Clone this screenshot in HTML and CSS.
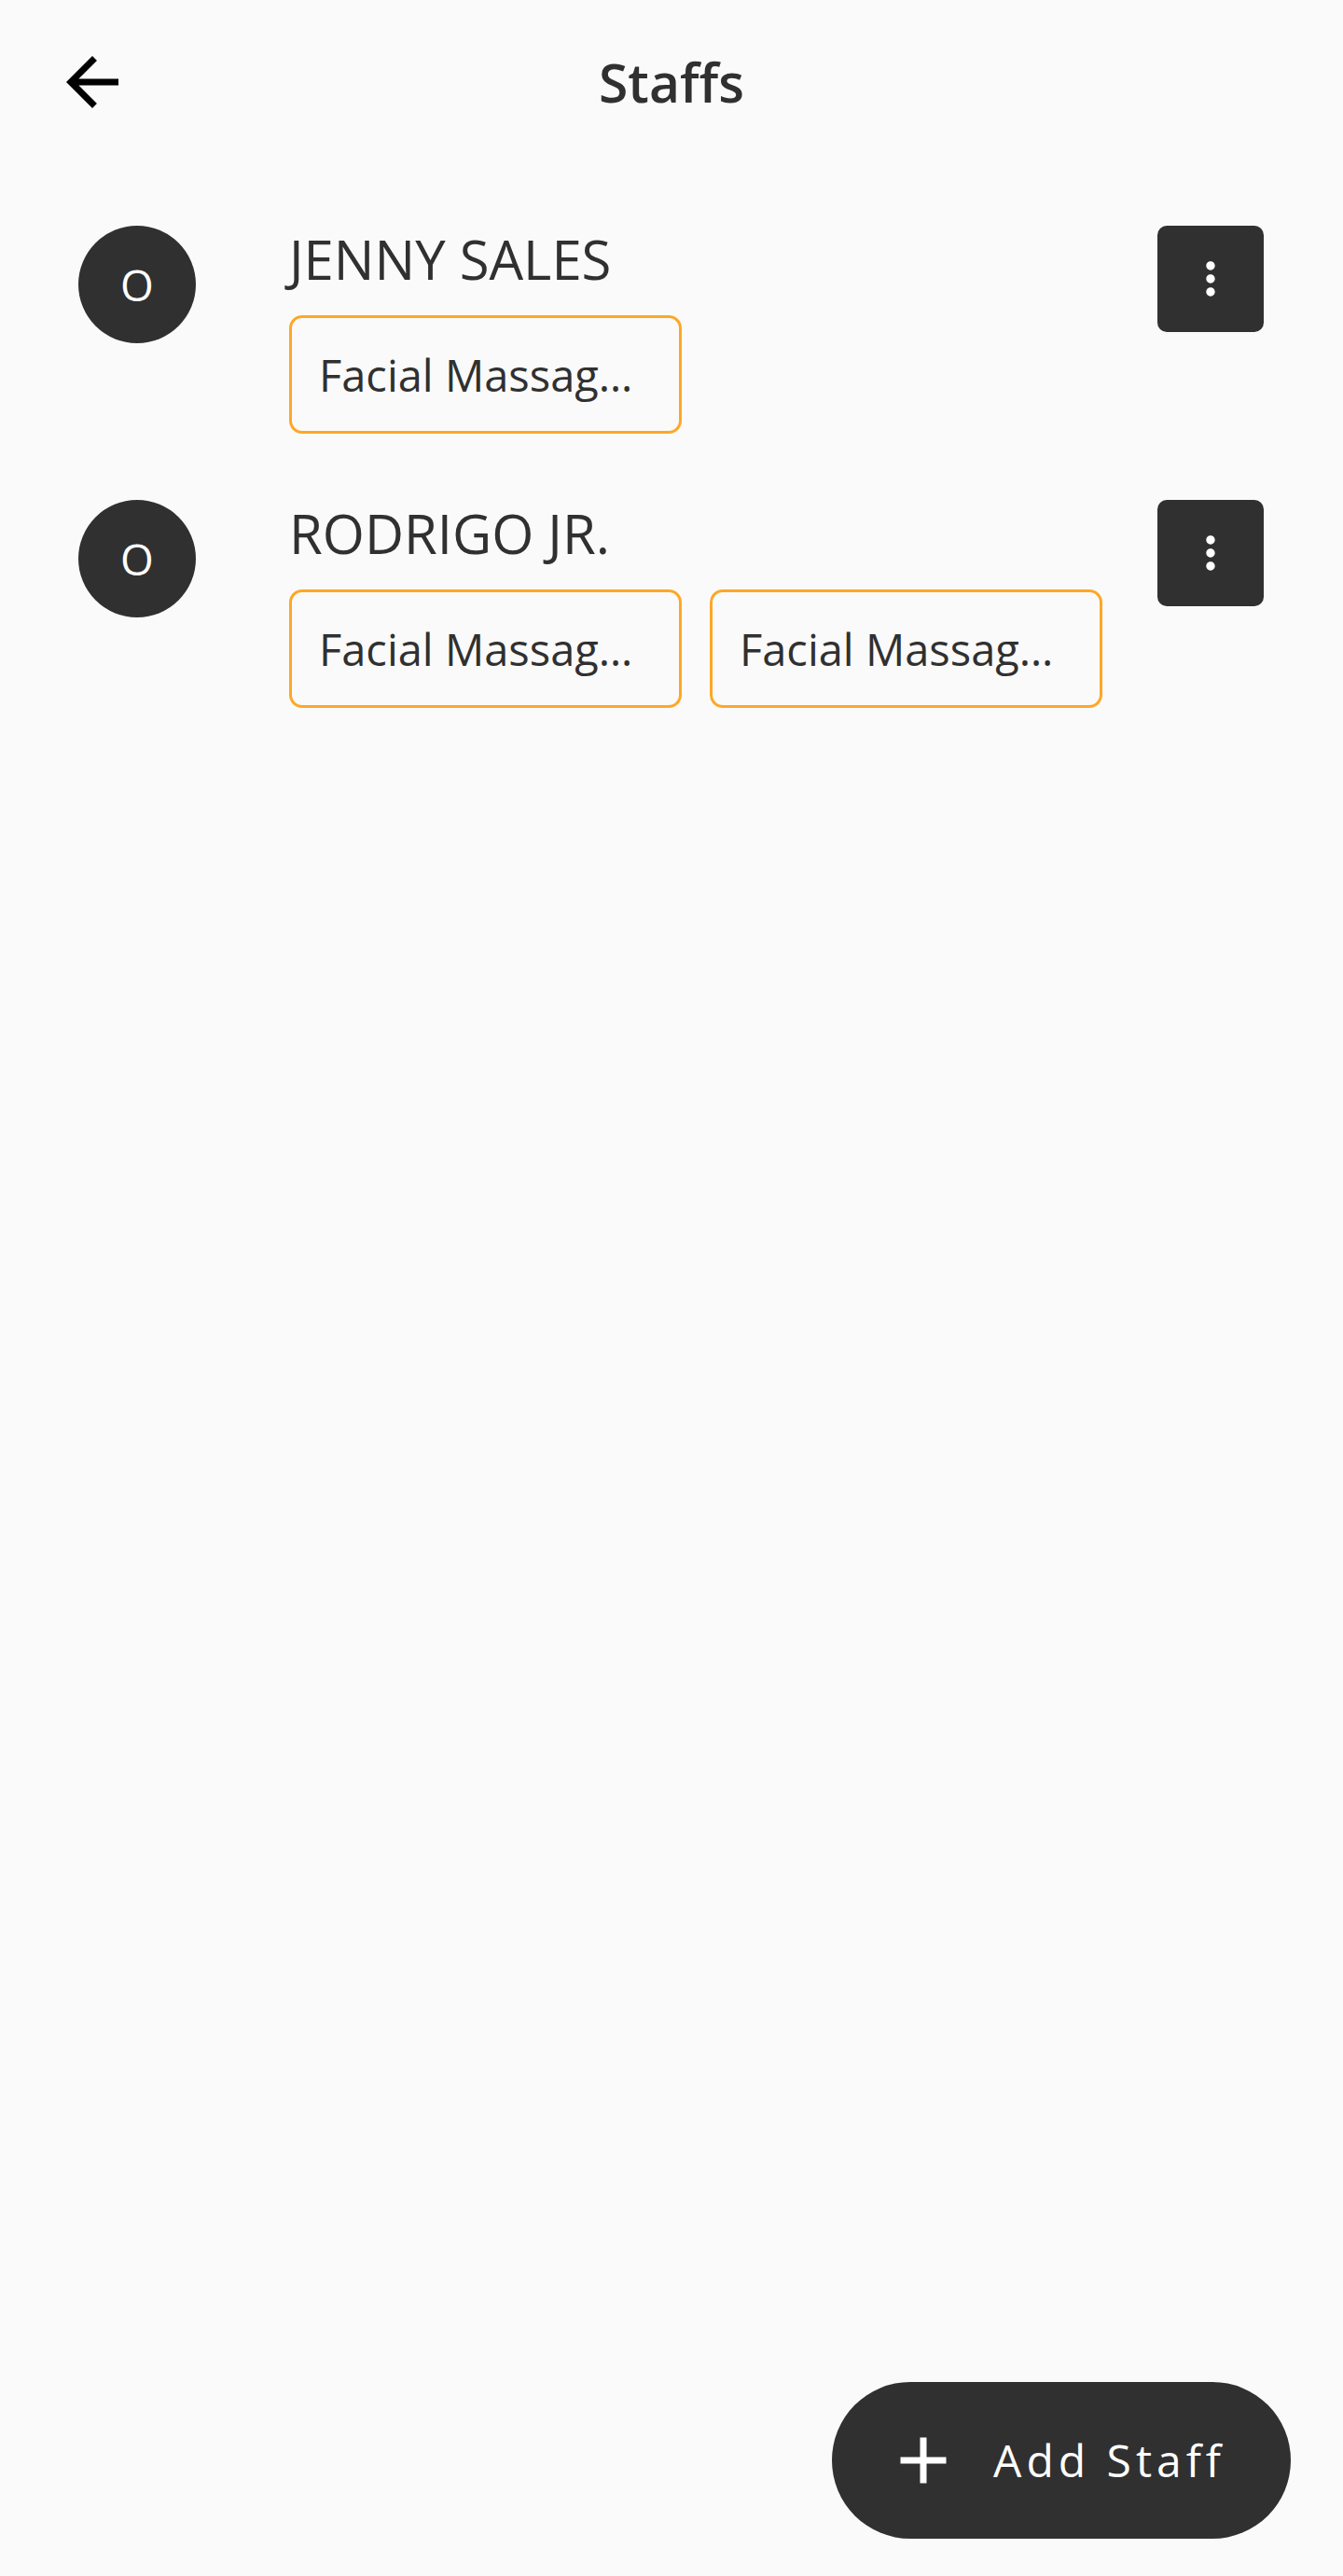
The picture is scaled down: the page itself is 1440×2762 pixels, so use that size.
FILE: index.html
```html
<!DOCTYPE html>
<html lang="en">
<head>
<meta charset="utf-8">
<title>Staffs</title>
<link rel="stylesheet" href="styles.css">
</head>
<body>
<div class="screen">
  <header class="appbar">
    <button class="back" aria-label="Back">
      <svg viewBox="0 0 24 24" width="84" height="84"><path d="M20 11H7.83l5.59-5.59L12 4l-8 8 8 8 1.41-1.41L7.83 13H20v-2z" fill="#000"/></svg>
    </button>
    <h1 class="title">Staffs</h1>
  </header>

  <main class="list">
    <div class="row">
      <div class="avatar">O</div>
      <div class="content">
        <div class="name">JENNY SALES</div>
        <div class="chips">
          <div class="chip"><span title="Facial Massage">Facial Massag…</span></div>
        </div>
      </div>
      <button class="menu" aria-label="More">
        <svg viewBox="0 0 24 24" width="56" height="56"><path d="M12 8c1.1 0 2-.9 2-2s-.9-2-2-2-2 .9-2 2 .9 2 2 2zm0 2c-1.1 0-2 .9-2 2s.9 2 2 2 2-.9 2-2-.9-2-2-2zm0 6c-1.1 0-2 .9-2 2s.9 2 2 2 2-.9 2-2-.9-2-2-2z" fill="#fff"/></svg>
      </button>
    </div>

    <div class="row">
      <div class="avatar">O</div>
      <div class="content">
        <div class="name">RODRIGO JR.</div>
        <div class="chips">
          <div class="chip"><span title="Facial Massage">Facial Massag…</span></div>
          <div class="chip"><span title="Facial Massage">Facial Massag…</span></div>
        </div>
      </div>
      <button class="menu" aria-label="More">
        <svg viewBox="0 0 24 24" width="56" height="56"><path d="M12 8c1.1 0 2-.9 2-2s-.9-2-2-2-2 .9-2 2 .9 2 2 2zm0 2c-1.1 0-2 .9-2 2s.9 2 2 2 2-.9 2-2-.9-2-2-2zm0 6c-1.1 0-2 .9-2 2s.9 2 2 2 2-.9 2-2-.9-2-2-2z" fill="#fff"/></svg>
      </button>
    </div>
  </main>

  <button class="fab">
    <svg viewBox="0 0 24 24" width="84" height="84"><path d="M19 13h-6v6h-2v-6H5v-2h6V5h2v6h6v2z" fill="#fff"/></svg>
    <span class="fab-label">Add Staff</span>
  </button>
</div>
</body>
</html>
```

FILE: styles.css
```css
* { box-sizing: border-box; }
html, body {
  margin: 0;
  padding: 0;
  height: 100%;
  background: #fafafa;
}
body {
  font-family: "Open Sans", "Noto Sans", sans-serif;
  color: #303030;
}
.screen {
  position: relative;
  width: 1440px;
  height: 2762px;
  background: #fafafa;
}
.appbar {
  position: relative;
  height: 176px;
  display: flex;
  align-items: center;
  justify-content: center;
}
.back {
  position: absolute;
  left: 57px;
  top: 46px;
  width: 84px;
  height: 84px;
  padding: 0;
  border: 0;
  background: none;
  display: flex;
}
.title {
  margin: 0;
  font-size: 57px;
  font-weight: 600;
  line-height: normal;
  color: #303030;
  letter-spacing: 0;
}
.list {
  padding-top: 66px;
  display: flex;
  flex-direction: column;
  gap: 71px;
}
.row {
  display: flex;
  align-items: flex-start;
  padding: 0 85px 0 84px;
}
.avatar {
  width: 126px;
  height: 126px;
  flex: none;
  border-radius: 50%;
  background: #303030;
  color: #fff;
  font-size: 46px;
  display: flex;
  align-items: center;
  justify-content: center;
}
.content {
  flex: 1;
  margin-left: 100px;
  min-width: 0;
}
.name {
  margin-top: 6px;
  font-size: 58px;
  line-height: 60px;
  font-weight: 400;
  color: #303030;
}
.chips {
  margin-top: 30px;
  display: flex;
  gap: 30px;
}
.chip {
  width: 421px;
  height: 127px;
  border: 3.5px solid #ffa726;
  border-radius: 14px;
  padding: 0 20px 0 29px;
  display: flex;
  align-items: center;
  font-size: 47px;
  color: #303030;
}
.chip span {
  display: block;
  white-space: nowrap;
  overflow: hidden;
  text-overflow: ellipsis;
}
.menu {
  width: 114px;
  height: 114px;
  flex: none;
  border: 0;
  padding: 0;
  border-radius: 10px;
  background: #303030;
  display: flex;
  align-items: center;
  justify-content: center;
}
.fab {
  position: absolute;
  right: 56px;
  bottom: 40px;
  height: 168px;
  border: 0;
  border-radius: 84px;
  background: #303030;
  color: #fff;
  display: flex;
  align-items: center;
  padding: 0 70px 0 56px;
  gap: 33px;
  font-family: "Open Sans", "Noto Sans", sans-serif;
}
.fab svg { flex: none; }
.fab-label {
  font-size: 48px;
  font-weight: 500;
  letter-spacing: 5px;
  line-height: 1;
}
```
